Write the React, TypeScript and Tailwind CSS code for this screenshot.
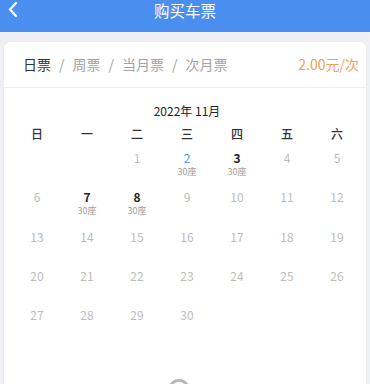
import React from "react";

const weekdays = ["日", "一", "二", "三", "四", "五", "六"];

type Day = { n: number; seats?: boolean; active?: boolean; today?: boolean };

function buildDays(): (Day | null)[] {
  const cells: (Day | null)[] = [null, null];
  for (let n = 1; n <= 30; n++) {
    cells.push({
      n,
      today: n === 2,
      active: n === 3 || n === 7 || n === 8,
      seats: n === 2 || n === 3 || n === 7 || n === 8,
    });
  }
  return cells;
}

export default function App() {
  const days = buildDays();
  const font = { fontFamily: '"Noto Sans CJK SC", "Noto Sans", sans-serif' };

  return (
    <div className="relative h-[384px] w-[370px] overflow-hidden bg-[#eef0f6]" style={font}>
      {/* Top bar */}
      <div className="relative flex h-[32px] items-start justify-center bg-[#4a8ff0] pt-[1px]">
        <svg className="absolute left-[7px] top-[1px]" width="12" height="17" viewBox="0 0 12 17">
          <path d="M9 2 L3 8.5 L9 15" fill="none" stroke="#fff" strokeWidth="2.2" strokeLinecap="round" strokeLinejoin="round" />
        </svg>
        <span className="text-[15.5px] leading-[18px] text-white">购买车票</span>
      </div>

      {/* Card */}
      <div className="mx-[4px] mt-[10px] rounded-[6px] bg-white shadow-[0_0_2px_rgba(0,0,0,0.06)]">
        <div className="flex h-[46px] items-center justify-between border-b border-[#efefef] pl-[19px] pr-[7px]">
          <div className="flex items-center text-[14px] text-[#a3a3a3]">
            <span className="text-[#333]">日票</span>
            <span className="mx-[8px]">/</span>
            <span>周票</span>
            <span className="mx-[8px]">/</span>
            <span>当月票</span>
            <span className="mx-[8px]">/</span>
            <span>次月票</span>
          </div>
          <span className="text-[14px] text-[#f0a050]">2.00元/次</span>
        </div>

        <div className="pl-[8px] pr-[4px] pt-[15px]">
          <div className="text-center text-[12px] leading-[16px] text-[#222]">2022年 11月</div>
          <div className="mt-[7px] grid grid-cols-7">
            {weekdays.map((w) => (
              <div key={w} className="text-center text-[12px] leading-[16px] font-medium text-[#333]">
                {w}
              </div>
            ))}
          </div>
          <div className="mt-[8px] grid grid-cols-7">
            {days.map((d, i) => (
              <div key={i} className="flex h-[39.25px] flex-col items-center">
                {d && (
                  <>
                    <span
                      className={
                        "text-[12px] leading-[16px] " +
                        (d.today ? "text-[#4a9af0]" : d.active ? "font-semibold text-[#222]" : "text-[#bcbcbc]")
                      }
                    >
                      {d.n}
                    </span>
                    {d.seats && <span className="text-[9px] leading-[12px] text-[#a0a0a0]">30座</span>}
                  </>
                )}
              </div>
            ))}
          </div>
          <div className="h-[60px]" />
        </div>
      </div>

      {/* Floating control peeking in at the bottom */}
      <div className="absolute left-[168px] top-[379px] h-[22px] w-[22px] rounded-full border-[3px] border-[#b8b8b8] bg-white" />
    </div>
  );
}
